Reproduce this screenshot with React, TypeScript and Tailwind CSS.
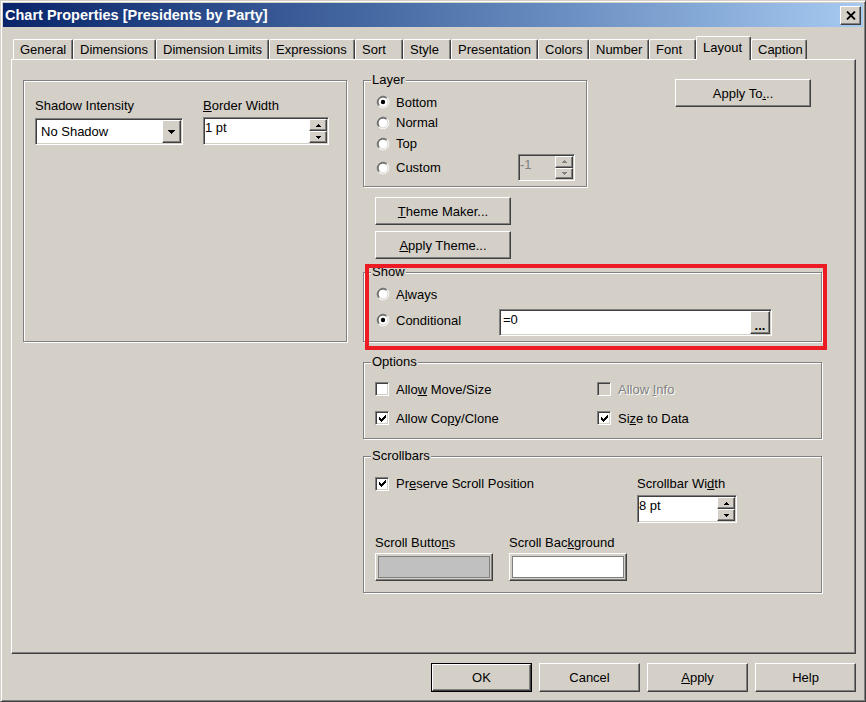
import type { ReactNode } from 'react';

const RAISED = 'border border-t-white border-l-white border-r-[#404040] border-b-[#404040] shadow-[inset_-1px_-1px_0_#808080]';
const SUNKEN = 'border border-t-[#808080] border-l-[#808080] border-r-white border-b-white shadow-[inset_1px_1px_0_#404040,inset_-1px_-1px_0_#d4d0c8]';
const GRAYED = 'text-[#808080] [text-shadow:1px_1px_0_#fff]';

const CHECK = ['......x', '.....xx', 'x...xxx', 'xx.xxx.', 'xxxxx..', '.xxx...', '..x....'];
const UP = ['..x..', '.xxx.', 'xxxxx'];
const DOWN = ['xxxxx', '.xxx.', '..x..'];
const DROP = ['xxxxxxx', '.xxxxx.', '..xxx..', '...x...'];

const TABS = [
  { label: 'General', w: 'w-[60px]' },
  { label: 'Dimensions', w: 'w-[83px]' },
  { label: 'Dimension Limits', w: 'w-[113px]' },
  { label: 'Expressions', w: 'w-[86px]' },
  { label: 'Sort', w: 'w-[48px]' },
  { label: 'Style', w: 'w-[48px]' },
  { label: 'Presentation', w: 'w-[87px]' },
  { label: 'Colors', w: 'w-[51px]' },
  { label: 'Number', w: 'w-[60px]' },
  { label: 'Font', w: 'w-[47px]' },
  { label: 'Layout', w: 'w-[55px]', active: true },
  { label: 'Caption', w: 'w-[56px]' },
];

function Pixels({ rows, color = '#000' }: { rows: string[]; color?: string }) {
  return (
    <svg width={rows[0].length} height={rows.length} className="block" shapeRendering="crispEdges">
      {rows.flatMap((r, y) =>
        r.split('').map((c, x) =>
          c === 'x' ? <rect key={`${x}-${y}`} x={x} y={y} width={1} height={1} fill={color} /> : null
        )
      )}
    </svg>
  );
}

function Radio({ checked }: { checked?: boolean }) {
  return (
    <svg width="14" height="14" viewBox="0 0 14 14" className="block shrink-0">
      <circle cx="7" cy="7" r="6" fill="#fff" />
      <path d="M2.76 11.24A6 6 0 0 1 11.24 2.76" fill="none" stroke="#808080" />
      <path d="M11.24 2.76A6 6 0 0 1 2.76 11.24" fill="none" stroke="#fff" />
      <path d="M3.46 10.54A5 5 0 0 1 10.54 3.46" fill="none" stroke="#404040" />
      <path d="M10.54 3.46A5 5 0 0 1 3.46 10.54" fill="none" stroke="#d4d0c8" />
      {checked && <circle cx="7" cy="7" r="2.2" fill="#000" />}
    </svg>
  );
}

function Check({ checked, disabled }: { checked?: boolean; disabled?: boolean }) {
  return (
    <span className={`${SUNKEN} w-[14px] h-[14px] shrink-0 flex items-center justify-center ${disabled ? 'bg-[#d4d0c8]' : 'bg-white'}`}>
      {checked && <Pixels rows={CHECK} />}
    </span>
  );
}

function Spin({ value, className, disabled }: { value: string; className: string; disabled?: boolean }) {
  const arrow = disabled ? '#808080' : '#000';
  return (
    <div className={`${SUNKEN} ${className} flex p-[1px] ${disabled ? 'bg-[#d4d0c8]' : 'bg-white'}`}>
      <span className={`flex-1 pt-[1px] ${disabled ? 'text-[#808080]' : ''}`}>{value}</span>
      <div className="w-[18px] flex flex-col">
        <div className={`${RAISED} bg-[#d4d0c8] flex-1 flex items-center justify-center`}>
          <Pixels rows={UP} color={arrow} />
        </div>
        <div className={`${RAISED} bg-[#d4d0c8] flex-1 flex items-center justify-center`}>
          <Pixels rows={DOWN} color={arrow} />
        </div>
      </div>
    </div>
  );
}

function Btn({ children, className }: { children: ReactNode; className: string }) {
  return <div className={`${RAISED} bg-[#d4d0c8] flex items-center justify-center ${className}`}>{children}</div>;
}

function Group({ title, className, children }: { title?: string; className: string; children: ReactNode }) {
  return (
    <div className={`relative shrink-0 border border-[#808080] shadow-[inset_1px_1px_0_#fff,1px_1px_0_#fff] ${className}`}>
      {title && <span className="absolute -top-[9px] left-[7px] bg-[#d4d0c8] px-[1px]">{title}</span>}
      {children}
    </div>
  );
}

function RadioRow({ label, checked, className = '' }: { label: ReactNode; checked?: boolean; className?: string }) {
  return (
    <div className={`flex items-center ${className}`}>
      <Radio checked={checked} />
      <span className="ml-[6px]">{label}</span>
    </div>
  );
}

function CheckRow({ label, checked, disabled, className = '' }: { label: ReactNode; checked?: boolean; disabled?: boolean; className?: string }) {
  return (
    <div className={`flex items-center ${className}`}>
      <Check checked={checked} disabled={disabled} />
      <span className={`ml-[7px] ${disabled ? GRAYED : ''}`}>{label}</span>
    </div>
  );
}

export default function App() {
  return (
    <div className="relative w-[866px] h-[702px] bg-[#d4d0c8] font-['Liberation_Sans',Arial,sans-serif] text-[13px] leading-[15px] text-black border border-t-[#d4d0c8] border-l-[#d4d0c8] border-r-[#404040] border-b-[#404040] shadow-[inset_1px_1px_0_#fff,inset_-1px_-1px_0_#808080] p-[2px] flex flex-col">
      {/* title bar */}
      <div className="h-[24px] shrink-0 flex items-center justify-between bg-linear-to-r from-[#0a246a] to-[#a6caf0] pl-[2px] pr-[2px]">
        <span className="font-bold text-white text-[14.5px] leading-[17px]">Chart Properties [Presidents by Party]</span>
        <div className={`${RAISED} bg-[#d4d0c8] w-[21px] h-[19px] flex items-center justify-center`}>
          <svg width="10" height="9" viewBox="0 0 10 9">
            <path d="M1 0.5L9 8.5M9 0.5L1 8.5" stroke="#000" strokeWidth="1.8" />
          </svg>
        </div>
      </div>

      {/* tabs */}
      <div className="mt-[9px] h-[23px] shrink-0 flex items-end pl-[10px]">
        {TABS.map(t => (
          <div
            key={t.label}
            className={`${t.w} shrink-0 bg-[#d4d0c8] border-t border-l border-t-white border-l-white border-r border-r-[#404040] shadow-[inset_-1px_0_0_#808080] rounded-t-[2px] flex items-center pl-[6px] whitespace-nowrap ${
              t.active ? 'h-[24px] -mb-[1px] relative z-10 pb-[3px]' : 'h-[20px]'
            }`}
          >
            {t.label}
          </div>
        ))}
      </div>

      {/* tab page */}
      <div className={`${RAISED} ml-[8px] w-[845px] h-[595px] shrink-0 flex items-start pl-[11px] pt-[20px]`}>
        <Group className="w-[324px] h-[262px]">
          <div className="flex pl-[11px] pt-[17px]">
            <div className="w-[168px]">
              <div>Shadow Intensity</div>
              <div className={`${SUNKEN} mt-[5px] w-[148px] h-[27px] bg-white flex items-center p-[1px]`}>
                <span className="flex-1 pl-[4px]">No Shadow</span>
                <div className={`${RAISED} bg-[#d4d0c8] w-[19px] h-full flex items-center justify-center`}>
                  <Pixels rows={DROP} />
                </div>
              </div>
            </div>
            <div>
              <div><span className="underline">B</span>order Width</div>
              <Spin className="mt-[4px] w-[126px] h-[28px]" value="1 pt" />
            </div>
          </div>
        </Group>

        <div className="ml-[16px] w-[459px] flex flex-col">
          <div className="flex items-start">
            <Group title="Layer" className="w-[224px] h-[107px]">
              <div className="pl-[12px] pt-[11px] pr-[11px]">
                <RadioRow checked label="Bottom" className="h-[20px]" />
                <RadioRow label="Normal" className="h-[21px]" />
                <RadioRow label="Top" className="h-[21px]" />
                <div className="h-[27px] flex items-center">
                  <RadioRow label="Custom" />
                  <Spin className="ml-auto w-[57px] h-[27px]" value="-1" disabled />
                </div>
              </div>
            </Group>
            <Btn className="ml-[88px] -mt-[1px] w-[136px] h-[28px]">
              <span>Apply To<span className="underline">.</span>..</span>
            </Btn>
          </div>

          <Btn className="ml-[12px] mt-[10px] w-[136px] h-[28px]">
            <span><span className="underline">T</span>heme Maker...</span>
          </Btn>
          <Btn className="ml-[12px] mt-[6px] w-[136px] h-[28px]">
            <span><span className="underline">A</span>pply Theme...</span>
          </Btn>

          <Group title="Show" className="mt-[13px] w-[459px] h-[70px]">
            <div className="pl-[12px] pt-[11px]">
              <RadioRow label={<>A<span className="underline">l</span>ways</>} className="h-[20px]" />
              <div className="mt-[5px] flex items-start">
                <RadioRow checked label="Conditional" className="w-[123px] h-[20px] mt-[1px]" />
                <div className={`${SUNKEN} w-[273px] h-[27px] bg-white flex p-[1px]`}>
                  <span className="flex-1 pl-[2px] pt-[1px]">=0</span>
                  <div className={`${RAISED} bg-[#d4d0c8] w-[20px] h-full flex items-end justify-center pb-[2px] leading-[10px] font-bold`}>...</div>
                </div>
              </div>
            </div>
          </Group>

          <Group title="Options" className="mt-[20px] w-[459px] h-[77px]">
            <div className="pl-[11px] pt-[16px]">
              <div className="flex h-[20px] items-center">
                <CheckRow label={<>Allo<span className="underline">w</span> Move/Size</>} className="w-[222px]" />
                <CheckRow disabled label={<>Allow <span className="underline">I</span>nfo</>} />
              </div>
              <div className="mt-[9px] flex h-[20px] items-center">
                <CheckRow checked label={<>Allow Co<span className="underline">p</span>y/Clone</>} className="w-[222px]" />
                <CheckRow checked label={<>Si<span className="underline">z</span>e to Data</>} />
              </div>
            </div>
          </Group>

          <Group title="Scrollbars" className="mt-[17px] w-[459px] h-[137px]">
            <div className="pl-[11px] pt-[19px]">
              <div className="flex">
                <CheckRow checked label={<>Pr<span className="underline">e</span>serve Scroll Position</>} className="w-[262px] h-[15px]" />
                <div>
                  <div>Scrollbar Wi<span className="underline">d</span>th</div>
                  <Spin className="mt-[4px] w-[100px] h-[28px]" value="8 pt" />
                </div>
              </div>
              <div className="mt-[12px] flex">
                <div className="w-[134px]">
                  <div>Scroll Butto<span className="underline">n</span>s</div>
                  <div className={`${RAISED} mt-[3px] w-[118px] h-[28px] bg-[#d4d0c8] p-[2px]`}>
                    <div className="w-full h-full border border-[#808080] bg-[#c0c0c0]" />
                  </div>
                </div>
                <div>
                  <div>Scroll Bac<span className="underline">k</span>ground</div>
                  <div className={`${RAISED} mt-[3px] w-[118px] h-[28px] bg-[#d4d0c8] p-[2px]`}>
                    <div className="w-full h-full border border-[#808080] bg-white" />
                  </div>
                </div>
              </div>
            </div>
          </Group>
        </div>
      </div>

      {/* dialog buttons */}
      <div className="mt-[9px] flex justify-end gap-[7px] pr-[7px]">
        <div className="border border-black w-[101px] h-[29px] flex">
          <Btn className="flex-1">OK</Btn>
        </div>
        <Btn className="w-[101px] h-[29px]">Cancel</Btn>
        <Btn className="w-[101px] h-[29px]"><span><span className="underline">A</span>pply</span></Btn>
        <Btn className="w-[101px] h-[29px]">Help</Btn>
      </div>

      {/* red annotation frame */}
      <div className="absolute left-[364px] top-[263px] w-[462px] h-[86px] border-4 border-[#ed1c24] pointer-events-none" />
    </div>
  );
}
